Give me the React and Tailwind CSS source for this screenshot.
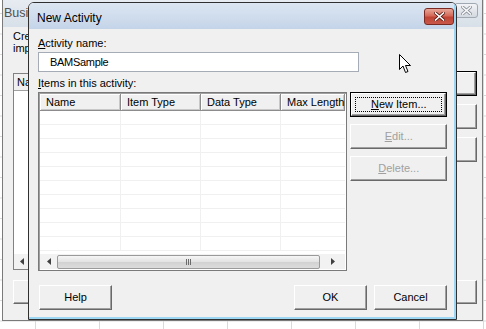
const font = "font-['Liberation_Sans',Arial,sans-serif]";

const Btn = ({ children, className = "", disabled, isDefault, focused = true }) => {
  const face = (
    <div
      className={`flex-1 flex items-center justify-center whitespace-nowrap bg-[#f0f0f0] border border-t-white border-l-white border-r-[#696969] border-b-[#696969] shadow-[inset_-1px_-1px_0_#a0a0a0] text-[11px] ${
        disabled ? "text-[#a0a0a0]" : "text-black"
      }`}
    >
      {isDefault && focused ? (
        <div className="w-[calc(100%-6px)] h-[calc(100%-6px)] border border-dotted border-black flex items-center justify-center">
          {children}
        </div>
      ) : (
        children
      )}
    </div>
  );
  return (
    <div className={`flex ${isDefault ? "border border-black" : ""} ${className}`}>
      {face}
    </div>
  );
};

const U = ({ children }) => <span className="underline underline-offset-1">{children}</span>;

const CloseX = ({ color = "white", stroke = "#5a1a14" }) => (
  <svg width="11" height="9" viewBox="0 0 11 9">
    <path d="M1.5 1 L9.5 8 M9.5 1 L1.5 8" stroke={stroke} strokeWidth="3.2" strokeLinecap="square" />
    <path d="M1.5 1 L9.5 8 M9.5 1 L1.5 8" stroke={color} strokeWidth="1.6" strokeLinecap="square" />
  </svg>
);

const cols = [
  { name: "Name", w: "w-[81px]" },
  { name: "Item Type", w: "w-[80px]" },
  { name: "Data Type", w: "w-[80px]" },
  { name: "Max Length", w: "flex-1" },
];

const ArrowLeft = () => (
  <svg width="4" height="7" viewBox="0 0 4 7">
    <path d="M4 0 L0 3.5 L4 7 Z" fill="#404040" />
  </svg>
);
const ArrowRight = () => (
  <svg width="4" height="7" viewBox="0 0 4 7">
    <path d="M0 0 L4 3.5 L0 7 Z" fill="#404040" />
  </svg>
);

const BackDialog = () => (
  <div className="absolute left-[2px] top-[-3px] w-[481px] h-[324px] border border-[#7a7a7a] bg-[#f0f0f0] flex flex-col">
    <div className="h-[29px] flex items-start justify-between bg-[linear-gradient(#e8edf3,#d7dfe8)] pl-[1px] pr-[4px]">
      <span className="text-[12.5px] text-[#505050] mt-[6px]">Business Activity Monitoring</span>
      <div className="mt-[5px] w-[24px] h-[15px] rounded-[3px] border border-[#a0a8b2] bg-[linear-gradient(#f2f4f7,#d4d9e0)] flex items-center justify-center">
        <CloseX color="#f8f8f8" stroke="#8a929c" />
      </div>
    </div>
    <div className="flex-1 flex flex-col pl-[10px] pr-[5px] text-[11px] leading-[12px]">
      <p className="mt-[3px]">Create a new activity or select an existing activity to edit or</p>
      <p>import.</p>
      <div className="flex mt-[19px] gap-[3px]">
        <div className="w-[430px] h-[197px] border border-[#828282] bg-white flex flex-col">
          <div className="h-[17px] flex items-center pl-[3px] bg-[#f0f0f0] border-b border-[#a0a0a0]">Name</div>
          <div className="flex-1" />
          <div className="h-[15px] flex items-center pl-[6px] bg-[#f2f2f2]">
            <ArrowLeft />
          </div>
        </div>
        <div className="flex-1 flex flex-col gap-[8px] mt-[-2px]">
          <Btn isDefault focused={false} className="h-[25px]" />
          <Btn className="h-[25px]" />
          <Btn className="h-[25px]" />
        </div>
      </div>
      <div className="flex justify-between mt-[10px]">
        <Btn className="w-[73px] h-[24px]" />
        <Btn className="w-[73px] h-[24px]" />
      </div>
    </div>
  </div>
);

const FrontDialog = () => (
  <div className="absolute left-[28px] top-[2px] w-[429px] h-[318px] border border-[#303030] rounded-t-[6px] overflow-hidden">
    <div className="w-full h-full flex flex-col border-r-2 border-b-2 border-[#9cd6f2] bg-[#f0f0f0]">
      <div className="h-[26px] flex items-start justify-between bg-[linear-gradient(#dce6f2,#c4d4e8)] pl-[8px]">
        <span className="text-[12px] text-black mt-[6px]">New Activity</span>
        <div className="mt-[5px] w-[30px] h-[17px] rounded-[3px] border border-[#7a2a22] bg-[linear-gradient(#e8a898,#d46a5a_45%,#c04434_55%,#c8584a)] flex items-center justify-center">
          <CloseX />
        </div>
      </div>
      <div className="flex-1 flex flex-col pl-[9px] pr-[7px] text-[11px] leading-[13px] text-black">
        <span className="mt-[8px]">
          <U>A</U>ctivity name:
        </span>
        <div className="mt-[2px] w-[321px] h-[20px] border border-[#a5acb5] bg-white flex items-center pl-[11px] text-[11px] tracking-[-0.3px]">
          BAMSample
        </div>
        <span className="mt-[5px]">
          <U>I</U>tems in this activity:
        </span>
        <div className="flex mt-[2px] gap-[3px]">
          <div className="w-[310px] h-[179px] border border-[#7a7a7a] shadow-[inset_1px_1px_0_#a0a0a0] bg-white flex flex-col p-[1px]">
            <div className="h-[17px] flex bg-[#f0f0f0]">
              {cols.map((c) => (
                <div
                  key={c.name}
                  className={`${c.w} flex items-center whitespace-nowrap pl-[6px] border-r border-b border-[#8c8c8c] shadow-[inset_1px_1px_0_#fff,inset_-1px_-1px_0_#c8c8c8]`}
                >
                  {c.name}
                </div>
              ))}
            </div>
            <div className="flex-1 flex flex-col">
              {Array.from({ length: 10 }).map((_, i) => (
                <div key={i} className="h-[14px] flex border-b border-[#f0f0f0]">
                  <div className="w-[81px] border-r border-[#f0f0f0]" />
                  <div className="w-[80px] border-r border-[#f0f0f0]" />
                  <div className="w-[80px] border-r border-[#f0f0f0]" />
                  <div className="flex-1" />
                </div>
              ))}
            </div>
            <div className="h-[15px] flex items-center bg-[#f2f2f2]">
              <div className="w-[17px] flex justify-center">
                <ArrowLeft />
              </div>
              <div className="w-[263px] h-[14px] rounded-[2px] border border-[#9a9a9a] bg-[linear-gradient(#f6f6f6,#e2e2e2_50%,#d2d2d2_51%,#dcdcdc)] flex items-center justify-center">
                <div className="flex gap-[1px]">
                  <div className="w-[1px] h-[6px] bg-[#6a6a6a]" />
                  <div className="w-[1px] h-[6px] bg-[#6a6a6a]" />
                  <div className="w-[1px] h-[6px] bg-[#6a6a6a]" />
                </div>
              </div>
              <div className="flex-1 flex justify-center">
                <ArrowRight />
              </div>
            </div>
          </div>
          <div className="w-[98px] flex flex-col gap-[7px]">
            <Btn isDefault className="h-[25px]">
              <span>
                <U>N</U>ew Item...
              </span>
            </Btn>
            <Btn disabled className="h-[25px]">
              <span>
                <U>E</U>dit...
              </span>
            </Btn>
            <Btn disabled className="h-[25px]">
              <span>
                <U>D</U>elete...
              </span>
            </Btn>
          </div>
        </div>
        <div className="flex mt-[14px] gap-[7px]">
          <Btn className="w-[73px] h-[25px] ml-[1px]">Help</Btn>
          <div className="flex-1" />
          <Btn className="w-[73px] h-[25px]">OK</Btn>
          <Btn className="w-[73px] h-[25px]">Cancel</Btn>
        </div>
      </div>
    </div>
  </div>
);

const Cursor = () => (
  <svg className="absolute left-[399px] top-[54px]" width="13" height="20" viewBox="0 0 13 20">
    <path
      d="M0.5 0.5 L0.5 15.5 L4 12 L6.5 18.5 L9 17.5 L6.5 11.5 L11.5 11.5 Z"
      fill="white"
      stroke="black"
      strokeWidth="1"
      strokeLinejoin="miter"
    />
  </svg>
);

export default function App() {
  return (
    <div
      className={`relative w-[486px] h-[329px] overflow-hidden bg-white ${font} bg-[linear-gradient(to_right,#dadada_1px,transparent_1px),linear-gradient(to_bottom,#dadada_1px,transparent_1px)] [background-size:64px_20.5px] [background-position:35px_13px]`}
    >
      <BackDialog />
      <FrontDialog />
      <Cursor />
    </div>
  );
}
